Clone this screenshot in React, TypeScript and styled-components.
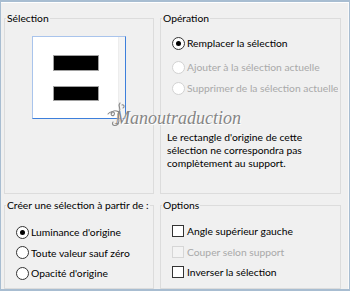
import React from "react";
import styled, { createGlobalStyle } from "styled-components";

const GlobalStyle = createGlobalStyle`
  html, body {
    margin: 0;
    padding: 0;
    background: #f0f0f0;
  }

  body {
    font-family: Lato, "Liberation Sans", sans-serif;
    font-size: 10.3px;
    color: #000;
  }
`;

const Window = styled.div`
  position: relative;
  box-sizing: border-box;
  width: 350px;
  height: 291px;
  background: #f0f0f0;
  border-style: solid;
  border-color: #a8bdd1;
  border-width: 2px 1px 2px 1px;
  box-shadow: inset 0 1px 0 #ffffff, inset -1px 0 0 #fafafa;
  padding: 9px 8px 0 3px;
  display: grid;
  grid-template-columns: 150px 181px;
  grid-template-rows: 183px 91px;
  column-gap: 6px;
  row-gap: 4px;
`;

const Group = styled.fieldset`
  margin: 0;
  padding: 0;
  min-width: 0;
  border: 1px solid #dcdcdc;
`;

const Legend = styled.legend`
  margin-left: 1px;
  padding: 0 1px;
  line-height: 14px;
  white-space: nowrap;
`;

const Body = styled.div<{ $top: number }>`
  padding-top: ${(p) => p.$top}px;
`;

const Preview = styled.div`
  box-sizing: border-box;
  width: 94px;
  height: 83px;
  margin: 0 auto;
  background: #fff;
  border: 1px solid #3d7fdb;
  border-top-color: #a9c4ec;
  border-left-color: #a9c4ec;
  display: flex;
`;

const Canvas = styled.div`
  flex: 1;
  display: flex;
  flex-direction: column;
  align-items: center;
  justify-content: center;
  gap: 15px;
`;

const ScrollStrip = styled.div`
  width: 6px;
  background: #f4f4f4;
  border-left: 1px solid #ededed;
`;

const Bar = styled.div<{ $h: number }>`
  box-sizing: border-box;
  width: 46px;
  height: ${(p) => p.$h}px;
  background: #000;
  border: 1px solid #a0a0a0;
`;

const OptionList = styled.div<{ $gap: number }>`
  display: flex;
  flex-direction: column;
  gap: ${(p) => p.$gap}px;
  padding: 0 2px 0 11px;
`;

const OptionRow = styled.div<{ $disabled?: boolean; $extra?: number }>`
  display: flex;
  align-items: center;
  gap: 2px;
  height: 16px;
  white-space: nowrap;
  overflow: hidden;
  margin-bottom: ${(p) => p.$extra ?? 0}px;
  color: ${(p) => (p.$disabled ? "#a9a9a9" : "#000")};
`;

const RadioCircle = styled.span<{ $checked?: boolean; $disabled?: boolean }>`
  box-sizing: border-box;
  flex: none;
  width: 13px;
  height: 13px;
  border-radius: 50%;
  border: 1px solid ${(p) => (p.$disabled ? "#d2d2d2" : "#333")};
  background: #fff;
  display: flex;
  align-items: center;
  justify-content: center;

  &::after {
    content: "";
    width: 5px;
    height: 5px;
    border-radius: 50%;
    background: #000;
    display: ${(p) => (p.$checked ? "block" : "none")};
  }
`;

const CheckSquare = styled.span<{ $disabled?: boolean }>`
  box-sizing: border-box;
  flex: none;
  width: 12px;
  height: 12px;
  margin-right: 1px;
  border: 1px solid ${(p) => (p.$disabled ? "#d6d6d6" : "#333")};
  background: ${(p) => (p.$disabled ? "#f3f3f3" : "#fff")};
`;

const Note = styled.p`
  margin: 35px 0 0;
  padding: 0 2px 0 6px;
  line-height: 13px;
`;

const Watermark = styled.span`
  position: absolute;
  left: 114px;
  top: 106px;
  font-family: "Liberation Serif", serif;
  font-style: italic;
  font-size: 18px;
  line-height: 20px;
  color: #858585;
  text-shadow: 0 0 1px #fff, 1px 1px 0 #fff;
  pointer-events: none;

  svg {
    position: absolute;
    left: -9px;
    top: -7px;
  }
`;

const Radio = ({ label, checked, disabled, extra }: { label: string; checked?: boolean; disabled?: boolean; extra?: number }) => (
  <OptionRow $disabled={disabled} $extra={extra}>
    <RadioCircle $checked={checked} $disabled={disabled} />
    <span>{label}</span>
  </OptionRow>
);

const Check = ({ label, disabled }: { label: string; disabled?: boolean }) => (
  <OptionRow $disabled={disabled}>
    <CheckSquare $disabled={disabled} />
    <span>{label}</span>
  </OptionRow>
);

const App = () => {
  return (
    <>
      <GlobalStyle />
      <Window>
        <Group>
          <Legend>Sélection</Legend>
          <Body $top={11}>
            <Preview>
              <Canvas>
                <Bar $h={16} />
                <Bar $h={15} />
              </Canvas>
              <ScrollStrip />
            </Preview>
          </Body>
        </Group>

        <Group>
          <Legend>Opération</Legend>
          <Body $top={10}>
            <OptionList $gap={5}>
              <Radio label="Remplacer la sélection" checked extra={3} />
              <Radio label="Ajouter à la sélection actuelle" disabled />
              <Radio label="Supprimer de la sélection actuelle" disabled />
            </OptionList>
            <Note>Le rectangle d'origine de cette sélection ne correspondra pas complètement au support.</Note>
          </Body>
        </Group>

        <Group>
          <Legend>Créer une sélection à partir de :</Legend>
          <Body $top={12}>
            <OptionList $gap={4.5}>
              <Radio label="Luminance d'origine" checked />
              <Radio label="Toute valeur sauf zéro" />
              <Radio label="Opacité d'origine" />
            </OptionList>
          </Body>
        </Group>

        <Group>
          <Legend>Options</Legend>
          <Body $top={11}>
            <OptionList $gap={4.5}>
              <Check label="Angle supérieur gauche" />
              <Check label="Couper selon support" disabled />
              <Check label="Inverser la sélection" />
            </OptionList>
          </Body>
        </Group>

        <Watermark>
          <svg width="22" height="26" viewBox="0 0 22 26" fill="none" stroke="#8a8a8a" strokeWidth="1.1" strokeLinecap="round">
            <path d="M14 2 C 11 5, 16 8, 13 11 C 10 14, 15 17, 12 23" />
            <path d="M16 4 C 18 3, 19 6, 17 7" />
            <path d="M2 13 C 5 9, 10 11, 8 14 C 6 16, 4 13, 6 12" />
            <path d="M13 11 C 9 9, 6 10, 5 12" />
            <path d="M12 23 C 9 26, 5 24, 7 21" />
          </svg>
          Manoutraduction
        </Watermark>
      </Window>
    </>
  );
};

export default App;
